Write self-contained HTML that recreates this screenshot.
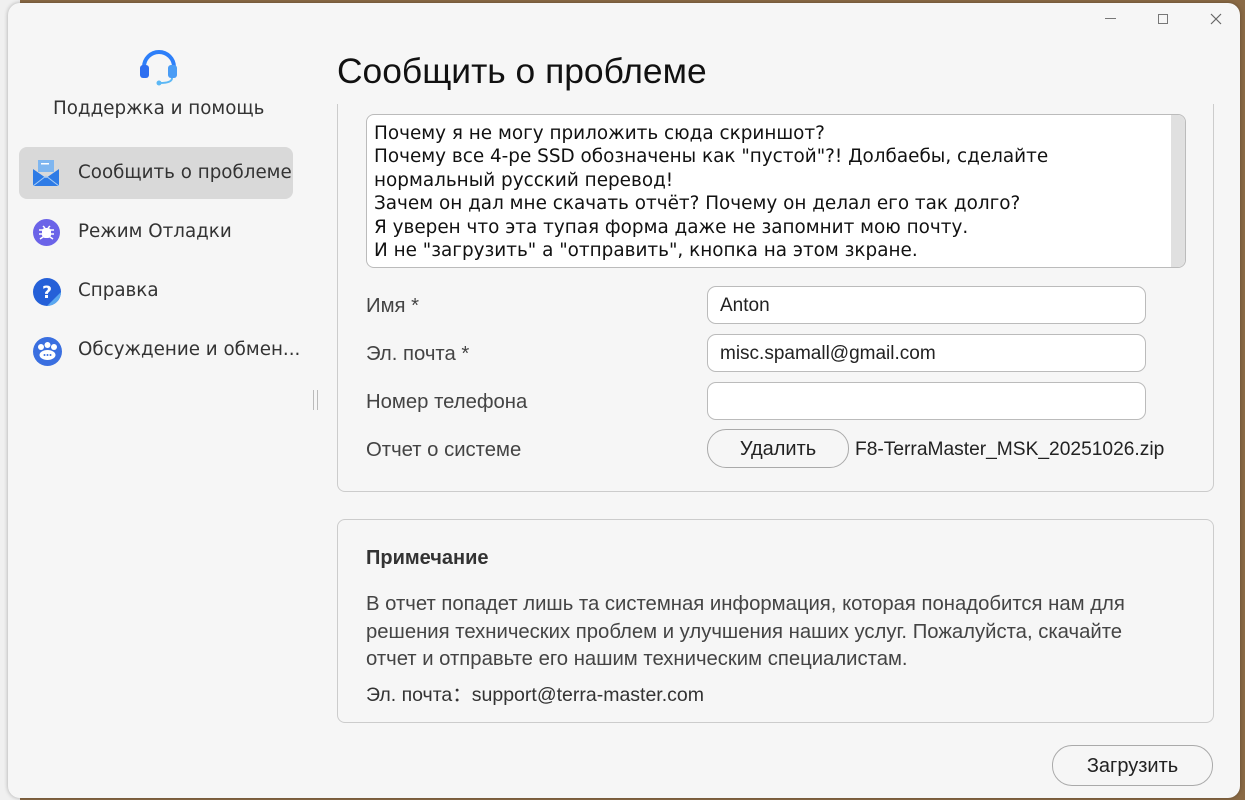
<!DOCTYPE html>
<html><head><meta charset="utf-8"><style>
body{margin:0;width:1245px;height:800px;overflow:hidden;background:#8a6a45;font-family:"Liberation Sans",sans-serif;position:relative}
.bgwin{position:absolute;left:0;top:0;width:20px;height:800px;background:#f0f0f0}
.win{position:absolute;left:8px;top:3px;width:1232px;height:795px;background:#f6f6f6;border-radius:12px;overflow:hidden;box-shadow:0 0 4px rgba(0,0,0,.3)}
.a{position:absolute}
.dv{font-family:"DejaVu Sans",sans-serif}
.side{font-family:"DejaVu Sans",sans-serif;font-size:18.3px;color:#333;white-space:nowrap}
.item{position:absolute;left:11px;width:274px;height:52px;line-height:52px;border-radius:8px;overflow:hidden}
.item span{position:absolute;left:59px}
.item svg{position:absolute;left:14px;top:13px}
.lbl{position:absolute;left:358px;font-size:20.3px;color:#444;white-space:nowrap}
.inp{position:absolute;left:699px;width:439px;height:38px;border:1px solid #bbb;border-radius:9px;background:#fff;font-size:19px;line-height:38px;padding-left:12px;box-sizing:border-box;color:#222}
</style></head><body>
<div class="bgwin"></div>
<div class="win">
 <div class="a" style="left:1097px;top:15px;width:11px;height:1px;background:#777"></div>
 <div class="a" style="left:1150px;top:11px;width:8px;height:8px;border:1px solid #777"></div>
 <svg class="a" style="left:1202px;top:10px" width="12" height="12"><path d="M1 1L11 11M11 1L1 11" stroke="#666" stroke-width="1.2"/></svg>
 <svg class="a" style="left:131px;top:44px" width="40" height="40" viewBox="0 0 40 40"><path d="M5 20a15 15 0 0 1 30 0" fill="none" stroke="#2d7ff9" stroke-width="4"/><rect x="1" y="18" width="9" height="13" rx="3" fill="#2d6ff0"/><rect x="29" y="18" width="9" height="13" rx="3" fill="#4a9cf5"/><path d="M33 31q0 5-12 5" fill="none" stroke="#5cb8f5" stroke-width="2"/><circle cx="20" cy="36" r="2.5" fill="#5cb8f5"/></svg>
 <div class="a side" style="left:45px;top:95px">Поддержка и помощь</div>
 <div class="item side" style="top:144px;background:#d9d9d9"><svg width="26" height="26" viewBox="0 0 26 26"><rect x="5" y="0" width="16" height="12" fill="#7fb6f0"/><rect x="8" y="3" width="8" height="1.5" fill="#fff"/><path d="M0 9L13 18L26 9V26H0Z" fill="#2e7be6"/><path d="M0 26L13 16L26 26" fill="none" stroke="#a8cdf5" stroke-width="1"/></svg><span>Сообщить о проблеме</span></div>
 <div class="item side" style="top:203px"><svg width="27" height="27"><circle cx="13.5" cy="13.5" r="13.5" fill="#6b63e8"/><rect x="9" y="9" width="9" height="10" rx="3" fill="#fff"/><path d="M6 11h4M17 11h4M6 15h4M17 15h4M7 20l3-2M20 20l-3-2M10 7l2 2M17 7l-2 2" stroke="#fff" stroke-width="1.5"/></svg><span>Режим Отладки</span></div>
 <div class="item side" style="top:262px"><svg width="28" height="28"><circle cx="14" cy="14" r="14" fill="#2560d8"/><path d="M28 14a14 14 0 0 1-14 14l10-10z" fill="#5aa8f0"/><text x="14" y="20" font-size="17" font-weight="bold" fill="#fff" text-anchor="middle" font-family="DejaVu Sans">?</text></svg><span>Справка</span></div>
 <div class="item side" style="top:321px;width:300px"><svg width="29" height="29"><circle cx="14.5" cy="14.5" r="14.5" fill="#3a6fe0"/><circle cx="8" cy="10" r="3" fill="#fff"/><circle cx="14.5" cy="8" r="3" fill="#fff"/><circle cx="21" cy="10" r="3" fill="#fff"/><ellipse cx="14.5" cy="18" rx="8" ry="5" fill="#fff"/><circle cx="11.5" cy="18" r="1" fill="#3a6fe0"/><circle cx="14.5" cy="18" r="1" fill="#3a6fe0"/><circle cx="17.5" cy="18" r="1" fill="#3a6fe0"/></svg><span>Обсуждение и обмен...</span></div>
 <div class="a" style="left:305px;top:387px;width:3px;height:20px;border-left:1px solid #bbb;border-right:1px solid #bbb"></div>
 <div class="a" style="left:329px;top:48px;font-size:35.4px;color:#111;white-space:nowrap">Сообщить о проблеме</div>
 <div class="a" style="left:329px;top:101px;width:875px;height:387px;border:1px solid #ccc;border-top:none;border-radius:0 0 8px 8px"></div>
 <div class="a" style="left:358px;top:111px;width:818px;height:152px;border:1px solid #bbb;border-radius:8px;background:#fff;overflow:hidden">
  <div class="a dv" style="left:7px;top:7px;font-size:18.4px;line-height:23.4px;color:#111;white-space:pre">Почему я не могу приложить сюда скриншот?
Почему все 4-ре SSD обозначены как "пустой"?! Долбаебы, сделайте
нормальный русский перевод!
Зачем он дал мне скачать отчёт? Почему он делал его так долго?
Я уверен что эта тупая форма даже не запомнит мою почту.
И не "загрузить" а "отправить", кнопка на этом зкране.</div>
  <div class="a" style="right:0;top:0;width:14px;height:152px;background:#e0e0e0"></div>
 </div>
 <div class="lbl" style="top:292px">Имя *</div>
 <div class="inp" style="top:283px">Anton</div>
 <div class="lbl" style="top:340px">Эл. почта *</div>
 <div class="inp" style="top:331px">misc.spamall@gmail.com</div>
 <div class="lbl" style="top:388px">Номер телефона</div>
 <div class="inp" style="top:379px"></div>
 <div class="lbl" style="top:436px">Отчет о системе</div>
 <div class="a" style="left:699px;top:426px;width:142px;height:39px;border:1px solid #aaa;border-radius:19px;box-sizing:border-box;text-align:center;line-height:39px;font-size:20px;color:#222">Удалить</div>
 <div class="a" style="left:847px;top:436px;font-size:19.2px;color:#222;white-space:nowrap">F8-TerraMaster_MSK_20251026.zip</div>
 <div class="a" style="left:329px;top:516px;width:875px;height:202px;border:1px solid #ccc;border-radius:8px"></div>
 <div class="a" style="left:358px;top:544px;font-size:20px;font-weight:bold;color:#333">Примечание</div>
 <div class="a" style="left:358px;top:588px;font-size:20.3px;line-height:27.5px;color:#444;width:800px">В отчет попадет лишь та системная информация, которая понадобится нам для решения технических проблем и улучшения наших услуг. Пожалуйста, скачайте отчет и отправьте его нашим техническим специалистам.</div>
 <div class="a" style="left:358px;top:675px;font-size:19.5px;color:#333;white-space:nowrap">Эл. почта：support@terra-master.com</div>
 <div class="a" style="left:1044px;top:742px;width:161px;height:41px;border:1px solid #aaa;border-radius:20px;box-sizing:border-box;text-align:center;line-height:41px;font-size:20px;color:#222">Загрузить</div>
</div>
</body></html>
